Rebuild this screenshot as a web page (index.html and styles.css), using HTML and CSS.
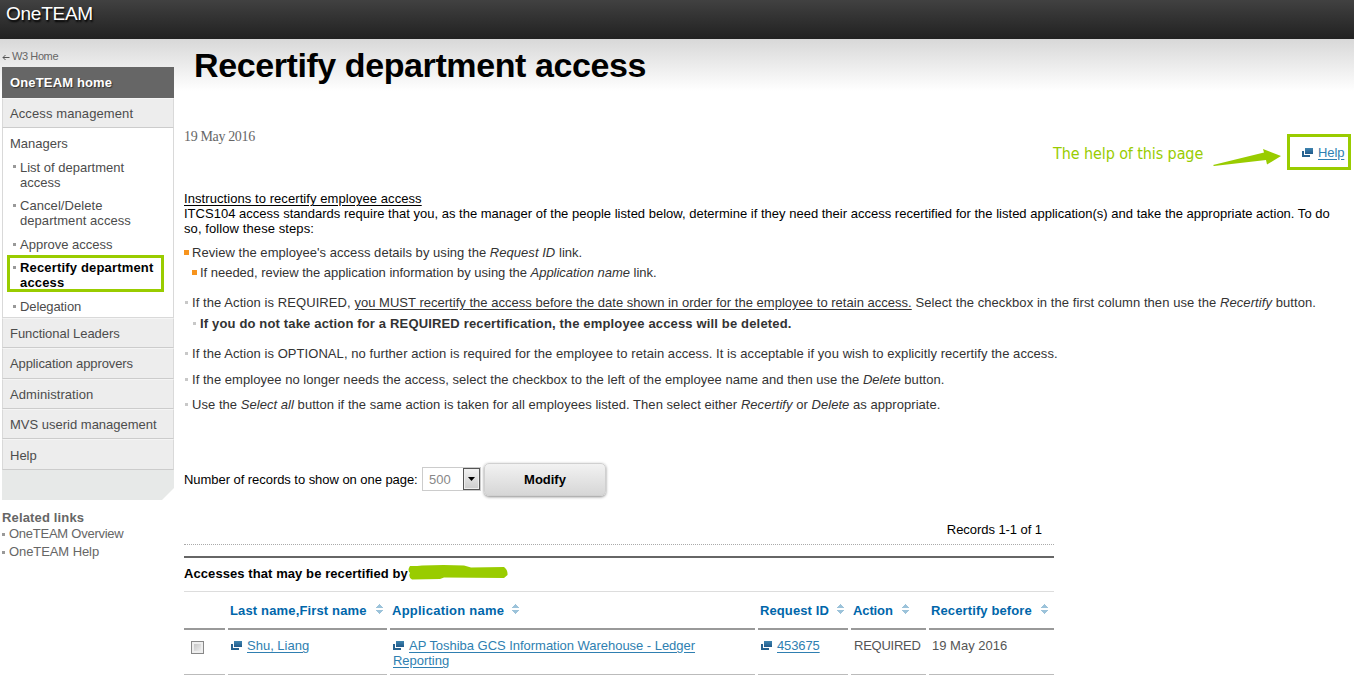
FILE: index.html
```html
<!DOCTYPE html>
<html lang="en">
<head>
<meta charset="utf-8">
<title>OneTEAM - Recertify department access</title>
<link rel="stylesheet" href="styles.css">
</head>
<body>
<svg width="0" height="0" class="defs">
  <defs>
    <linearGradient id="win" x1="0" y1="0" x2="0" y2="1"><stop offset="0" stop-color="#3f85b0"/><stop offset="1" stop-color="#20598a"/></linearGradient>
    <symbol id="popup" viewBox="0 0 11 9"><path fill="url(#win)" d="M3 0h8v6H3z"/><path fill="#27628f" d="M0 3h2v4h6v2H0z"/></symbol>
    <symbol id="sort" viewBox="0 0 7 10"><path fill="#9cc3da" d="M3 0h1v1h1v1h1v1h1v1H0V3h1V2h1V1h1zM0 6h7v1H6v1H5v1H4v1H3V9H2V8H1V7H0z"/></symbol>
  </defs>
</svg>
<header class="masthead"><span class="brand">OneTEAM</span></header>
<div class="page">
  <aside class="sidebar">
    <div class="back"><svg width="8" height="7" viewBox="0 0 8 7"><path d="M7.500 3.500H1M3.500 1L1 3.500 3.500 6" fill="none" stroke="#555"/></svg><span class="t-back">W3 Home</span></div>
    <nav class="nav">
      <div class="home"><span class="t-home">OneTEAM home</span></div>
      <div class="row"><span class="t-am">Access management</span></div>
      <div class="open">
        <div class="t-man">Managers</div>
        <ul class="sub">
          <li class="s1"><span class="t-s1">List of department<br>access</span></li>
          <li class="s2"><span class="t-s2">Cancel/Delete<br>department access</span></li>
          <li class="s3"><span class="t-s3">Approve access</span></li>
          <li class="s4 current"><span class="t-s4">Recertify department<br>access</span></li>
          <li class="s5"><span class="t-s5">Delegation</span></li>
        </ul>
      </div>
      <div class="row"><span class="t-fl">Functional Leaders</span></div>
      <div class="row tall"><span class="t-aa">Application approvers</span></div>
      <div class="row"><span class="t-ad">Administration</span></div>
      <div class="row"><span class="t-mv">MVS userid management</span></div>
      <div class="row tall last"><span class="t-he">Help</span></div>
    </nav>
    <div class="nav-foot"></div>
    <div class="related">
      <h2><span class="t-rl">Related links</span></h2>
      <ul>
        <li><span class="t-ro">OneTEAM Overview</span></li>
        <li><span class="t-rh">OneTEAM Help</span></li>
      </ul>
    </div>
  </aside>
  <main class="main">
    <h1><span class="t-title">Recertify department access</span></h1>
    <div class="topline">
      <div class="date"><span class="t-date">19 May 2016</span></div>
      <div class="annot">
        <span class="t-note">The help of this page</span>
        <svg class="arrow" width="70" height="18" viewBox="0 0 70 18"><path fill="#9c0" d="M0 16L51 3.500 50 0 68 7 54 15.500 53 11 1 17z"/></svg>
        <div class="helpbox"><svg width="11" height="9"><use href="#popup"/></svg><a class="t-help">Help</a></div>
      </div>
    </div>
    <div class="intro">
      <div><u class="t-i1">Instructions to recertify employee access</u></div>
      <div><span class="t-i2">ITCS104 access standards require that you, as the manager of the people listed below, determine if they need their access recertified for the listed application(s) and take the appropriate action. To do</span></div>
      <div><span class="t-i3">so, follow these steps:</span></div>
    </div>
    <ul class="steps">
      <li class="orange b1"><span class="t-b1">Review the employee's access details by using the <i>Request ID</i> link.</span></li>
      <li class="orange in b2"><span class="t-b2">If needed, review the application information by using the <i>Application name</i> link.</span></li>
      <li class="b3"><span class="t-b3">If the Action is REQUIRED, <u>you MUST recertify the access before the date shown in order for the employee to retain access.</u> Select the checkbox in the first column then use the <i>Recertify</i> button.</span></li>
      <li class="in b4"><b class="t-b4">If you do not take action for a REQUIRED recertification, the employee access will be deleted.</b></li>
      <li class="b5"><span class="t-b5">If the Action is OPTIONAL, no further action is required for the employee to retain access. It is acceptable if you wish to explicitly recertify the access.</span></li>
      <li class="b6"><span class="t-b6">If the employee no longer needs the access, select the checkbox to the left of the employee name and then use the <i>Delete</i> button.</span></li>
      <li class="b7"><span class="t-b7">Use the <i>Select all</i> button if the same action is taken for all employees listed. Then select either <i>Recertify</i> or <i>Delete</i> as appropriate.</span></li>
    </ul>
    <div class="pager">
      <span class="pager-label"><span class="t-num">Number of records to show on one page:</span></span>
      <span class="select"><span class="value">500</span><span class="drop"><svg width="7" height="4" viewBox="0 0 7 4"><path d="M0 0h7L3.500 4z"/></svg></span></span>
      <button class="modify"><span class="t-mod">Modify</span></button>
    </div>
    <div class="results">
      <div class="count"><span class="t-rec">Records 1-1 of 1</span></div>
      <div class="caption"><span class="t-cap">Accesses that may be recertified by</span><svg width="100" height="15" viewBox="0 0 100 15"><path fill="#9c0" d="M2 1Q10 1 14 .5Q36-.5 56 .5L63 2.500 96 2Q100 5 99.500 10L96 13 36 12.500 32 14 4 14.500Q0 12 2 8Q-1 5 2 1z"/></svg></div>
      <div class="grid head">
        <div></div>
        <div><span class="t-h1">Last name,First name</span><svg width="7" height="10"><use href="#sort"/></svg></div>
        <div><span class="t-h2">Application name</span><svg width="7" height="10"><use href="#sort"/></svg></div>
        <div><span class="t-h3">Request ID</span><svg width="7" height="10"><use href="#sort"/></svg></div>
        <div><span class="t-h4">Action</span><svg width="7" height="10"><use href="#sort"/></svg></div>
        <div><span class="t-h5">Recertify before</span><svg width="7" height="10"><use href="#sort"/></svg></div>
      </div>
      <div class="grid body">
        <div><span class="check"></span></div>
        <div><svg width="11" height="9"><use href="#popup"/></svg><a class="t-c1">Shu, Liang</a></div>
        <div><svg width="11" height="9"><use href="#popup"/></svg><a class="t-c2">AP Toshiba GCS Information Warehouse - Ledger<br>Reporting</a></div>
        <div><svg width="11" height="9"><use href="#popup"/></svg><a class="t-c3">453675</a></div>
        <div><span class="t-c4">REQUIRED</span></div>
        <div><span class="t-c5">19 May 2016</span></div>
      </div>
    </div>
  </main>
</div>
</body>
</html>
```
FILE: styles.css
```css
*, *::before, *::after { box-sizing: border-box; }
body { margin: 0; height: 679px; overflow: hidden; background: #fff; color: #000; font: 13px/15px "Liberation Sans", Arial, sans-serif; }
.defs { position: absolute; }
ul { list-style: none; margin: 0; padding: 0; }
span, a, u { white-space: nowrap; }
.masthead { height: 39px; background: linear-gradient(#414141, #212121); padding: 3px 0 0 6px; color: #fff; font-size: 19px; line-height: 21px; text-shadow: 1px 2px 2px #000; }
.page { display: flex; height: 640px; background: linear-gradient(#d8d8d8, #fff 52px); }
.sidebar { width: 184px; padding: 10px 10px 0 2px; color: #555; }
.back { display: flex; align-items: center; gap: 2px; height: 15px; margin-bottom: 3px; font-size: 11px; color: #666; }
.back svg { margin-top: 2px; }
.nav { width: 172px; }
.home { height: 31px; padding: 8px; background: #666; color: #fff; font-weight: bold; text-shadow: 1px 1px 1px #333; }
.row { height: 30px; padding: 7px 7px 0; background: #ededed; border: 1px solid #d9d9d9; border-top: 1px solid #f5f5f5; border-bottom-color: #ccc; color: #4c4c4c; }
.row.tall { height: 31px; }
.row.last { padding-top: 8px; }
.open { height: 190px; padding: 8px 7px 0; background: #fff; border: 1px solid #d9d9d9; border-top: 0; color: #4c4c4c; }
.sub { padding: 9px 0 0 3px; }
.sub li { position: relative; padding-left: 7px; margin-bottom: 8px; }
.sub li::before { content: ""; position: absolute; left: 0; top: 6px; width: 3px; height: 3px; background: #999; }
.sub .s1::before { top: 5px; }
.sub .s2 { margin-bottom: 9px; }
.sub .s4 { margin-bottom: 9px; }
.current { color: #000; font-weight: bold; }
.sub .current::after { content: ""; position: absolute; left: -6px; top: -5px; width: 157px; height: 37px; border: 3px solid #9c0; }
.nav-foot { width: 172px; height: 30px; background: #e7e9e8; clip-path: polygon(0 0, 100% 0, 100% 18px, 160px 100%, 0 100%); }
.related { padding-top: 10px; color: #666; }
.related h2 { margin: 0 0 -1px; font-size: 13px; line-height: 15px; }
.related li { display: flex; align-items: center; gap: 4px; height: 18px; }
.related li::before { content: ""; width: 3px; height: 3px; background: #999; margin-top: 3px; }
.main { flex: 1; }
h1 { margin: 0; padding: 6px 0 0 10px; height: 89px; font-size: 34px; line-height: 40px; color: #000; }
.topline { display: flex; justify-content: space-between; height: 63px; }
.date { font: 14px/17px "Liberation Serif", serif; color: #666; }
.annot { display: flex; align-items: flex-start; height: 40px; padding: 6px 3px 0 0; color: #9c0; }
.t-note { font: 16px/20px "DejaVu Sans Condensed", "DejaVu Sans", sans-serif; font-stretch: condensed; padding-top: 10px; width: 160px; letter-spacing: -.1px; }
.arrow { margin: 15px 4px 0 0; }
.helpbox { display: flex; width: 64px; height: 36px; border: 3px solid #9c0; padding: 8px 0 0 12px; gap: 5px; }
.helpbox svg { margin-top: 3px; }
a { color: #2f7fb1; text-decoration: underline; text-underline-offset: 2px; }
.intro { height: 54px; }
u { text-underline-offset: 2px; }
.steps { color: #333; height: 218px; }
.steps li { display: flex; height: 20px; gap: 4px; padding-left: 1px; }
.steps li.in { padding-left: 9px; }
.steps li::before { content: ""; width: 3px; height: 3px; margin-top: 6px; background: #c8c8c8; }
.steps li.orange { gap: 3px; padding-left: 0; }
.steps li.orange.in { padding-left: 8px; }
.steps li.orange::before { width: 5px; height: 5px; margin-top: 5px; background: #f7941d; }
.steps .b2 { height: 30px; }
.steps .b3 { height: 21px; }
.steps .b4 { height: 30px; }
.steps .b5 { height: 26px; }
.steps .b6 { height: 25px; }
.pager { display: flex; height: 34px; }
.pager-label { width: 238px; padding-top: 9px; }
.select { display: flex; width: 59px; height: 24px; margin: 4px 3px 0 0; border: 1px solid #ccc; background: #fff; color: #888; }
.value { width: 40px; padding: 4px 0 0 6px; }
.drop { display: flex; width: 17px; height: 22px; align-items: center; justify-content: center; border: 1px solid #555; background: linear-gradient(#f2f2f2, #ccc); box-shadow: inset 0 0 0 1px #eee; }
.modify { width: 122px; height: 33px; margin: 0; padding: 0; border: 1px solid #d0d0d0; border-radius: 5px; background: linear-gradient(#f2f2f2, #d6d6d6); box-shadow: 0 1px 3px #888; font: bold 13px "Liberation Sans", Arial, sans-serif; color: #000; }
.results { width: 870px; }
.count { display: flex; justify-content: flex-end; height: 48px; padding: 25px 12px 0 0; border-bottom: 1px dotted #aaa; }
.caption { display: flex; height: 36px; margin-top: 11px; padding-top: 8px; border-top: 2px solid #666; border-bottom: 1px solid #ddd; font-weight: bold; }
.caption svg { margin-top: -1px; }
.grid { display: grid; grid-template-columns: 41px 159px 365px 90px 75px 125px; column-gap: 3px; }
.head { height: 38px; color: #06a; font-weight: bold; }
.head > div { display: flex; justify-content: space-between; padding: 11px 4px 0 2px; border-bottom: 2px solid #999; }
.head > div:nth-child(3) { justify-content: flex-start; gap: 8px; }
.head > div:nth-child(5) { padding-right: 17px; }
.head > div:last-child { padding-right: 6px; }
.head svg { margin-top: 1px; }
.body { height: 45px; color: #555; }
.body > div { padding: 8px 0 0 3px; border-bottom: 1px solid #bbb; }
.body svg { margin-right: 5px; }
.check { display: block; width: 13px; height: 13px; margin: 3px 0 0 4px; border: 1px solid #888; background: linear-gradient(135deg, #bbb, #f8f8f8); box-shadow: inset 0 0 0 2px #eee; }

/* tracking */
.brand { letter-spacing: -.25px; }
.t-title { letter-spacing: -.41px; }
.t-back { letter-spacing: -.4px; }
.t-home, .t-rl, .t-h1 { letter-spacing: .15px; }
.t-am { letter-spacing: .1px; }
.t-s2 { letter-spacing: .06px; }
.t-s4 { letter-spacing: .17px; }
.t-s5, .t-help { letter-spacing: -.1px; }
.t-fl { letter-spacing: -.05px; }
.t-aa { letter-spacing: -.1px; }
.t-ad { letter-spacing: .07px; }
.t-ro { letter-spacing: -.25px; }
.t-rh { letter-spacing: -.08px; }
.t-date { letter-spacing: -.35px; }
.t-i1 { letter-spacing: .07px; }
.t-i2 { letter-spacing: .01px; }
.t-i3 { letter-spacing: .09px; }
.t-b1 { letter-spacing: .04px; }
.t-b2 { letter-spacing: -.02px; }
.t-b3 { letter-spacing: .075px; }
.t-b3 u { letter-spacing: .02px; }
.t-b4 { letter-spacing: .16px; }
.t-b5 { letter-spacing: .065px; }
.t-b6 { letter-spacing: .04px; }
.t-b7 { letter-spacing: .043px; }
.t-num { letter-spacing: -.05px; }
.t-rec { letter-spacing: -.06px; }
.t-cap { letter-spacing: .08px; }
.t-h2 { letter-spacing: .24px; }
.t-h3 { letter-spacing: .1px; }
.t-h4, .t-c3 { letter-spacing: -.12px; }
.t-h5 { letter-spacing: .12px; }
.t-c2 { letter-spacing: -.03px; }
.t-c4 { letter-spacing: -.25px; }
```
